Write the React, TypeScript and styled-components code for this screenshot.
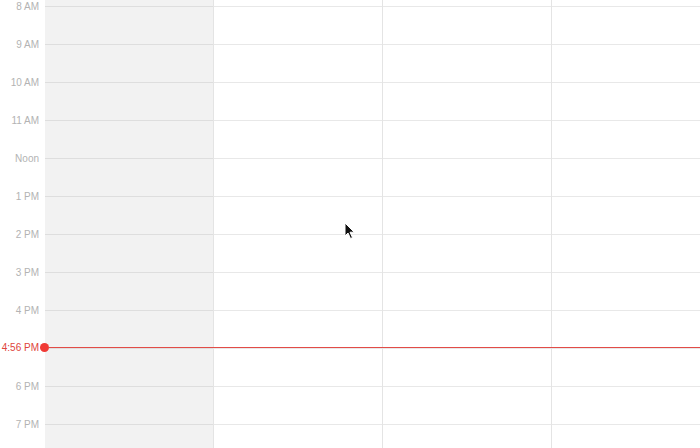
import React from 'react';
import styled, { createGlobalStyle } from 'styled-components';

const GlobalStyle = createGlobalStyle`
  html, body {
    margin: 0;
    padding: 0;
    background: #fff;
    font-family: "Liberation Sans", Arial, sans-serif;
  }
`;

const HOUR = 38;
const TOP = 6;

const hours = ['8 AM', '9 AM', '10 AM', '11 AM', 'Noon', '1 PM', '2 PM', '3 PM', '4 PM', '', '6 PM', '7 PM'];
const days = [true, false, false, false];

const Calendar = styled.div`
  position: relative;
  display: flex;
  width: 700px;
  height: 448px;
  overflow: hidden;
  background: #fff;
`;

const Gutter = styled.div`
  flex: 0 0 45px;
  padding-top: ${TOP}px;
`;

const HourLabel = styled.div`
  height: ${HOUR}px;
  box-sizing: border-box;
  padding-right: 6px;
  text-align: right;
  font-size: 10px;
  line-height: 12px;
  color: #b3b3b3;
  transform: translateY(-5px);
`;

const Days = styled.div`
  display: flex;
  flex: 1;
`;

const DayColumn = styled.div<{ $weekend?: boolean }>`
  flex: 0 0 169px;
  box-sizing: border-box;
  padding-top: ${TOP}px;
  background: ${(p) => (p.$weekend ? '#f2f2f2' : '#fff')};
  border-right: 1px solid #e4e4e4;
`;

const HourCell = styled.div<{ $weekend?: boolean }>`
  height: ${HOUR}px;
  box-sizing: border-box;
  border-top: 1px solid ${(p) => (p.$weekend ? '#dedede' : '#e8e8e8')};
`;

const NowLine = styled.div`
  position: absolute;
  left: 0;
  right: 0;
  top: 342px;
  height: 11px;
  display: flex;
  align-items: center;
  pointer-events: none;
`;

const NowLabel = styled.span`
  flex: 0 0 39px;
  text-align: right;
  font-size: 10px;
  line-height: 11px;
  color: #e0443b;
`;

const NowDot = styled.span`
  flex: 0 0 9px;
  height: 9px;
  margin-left: 1px;
  border-radius: 50%;
  background: #f03a35;
`;

const NowRule = styled.span`
  flex: 1;
  height: 1px;
  background: #e24c47;
`;

const Cursor = styled.svg`
  position: absolute;
  left: 344px;
  top: 222px;
  pointer-events: none;
`;

export default function App() {
  return (
    <>
      <GlobalStyle />
      <Calendar>
        <Gutter>
          {hours.map((h, i) => (
            <HourLabel key={i}>{h}</HourLabel>
          ))}
        </Gutter>
        <Days>
          {days.map((weekend, d) => (
            <DayColumn key={d} $weekend={weekend}>
              {hours.map((_, i) => (
                <HourCell key={i} $weekend={weekend} />
              ))}
            </DayColumn>
          ))}
        </Days>
        <NowLine>
          <NowLabel>4:56 PM</NowLabel>
          <NowDot />
          <NowRule />
        </NowLine>
        <Cursor width="12" height="18" viewBox="0 0 12 18">
          <path d="M1 1 L1 14 L4 11 L6.5 16.5 L8.5 15.6 L6 10.2 L10.2 10.2 Z" fill="#111" stroke="#fff" strokeWidth="1" strokeLinejoin="round" />
        </Cursor>
      </Calendar>
    </>
  );
}
